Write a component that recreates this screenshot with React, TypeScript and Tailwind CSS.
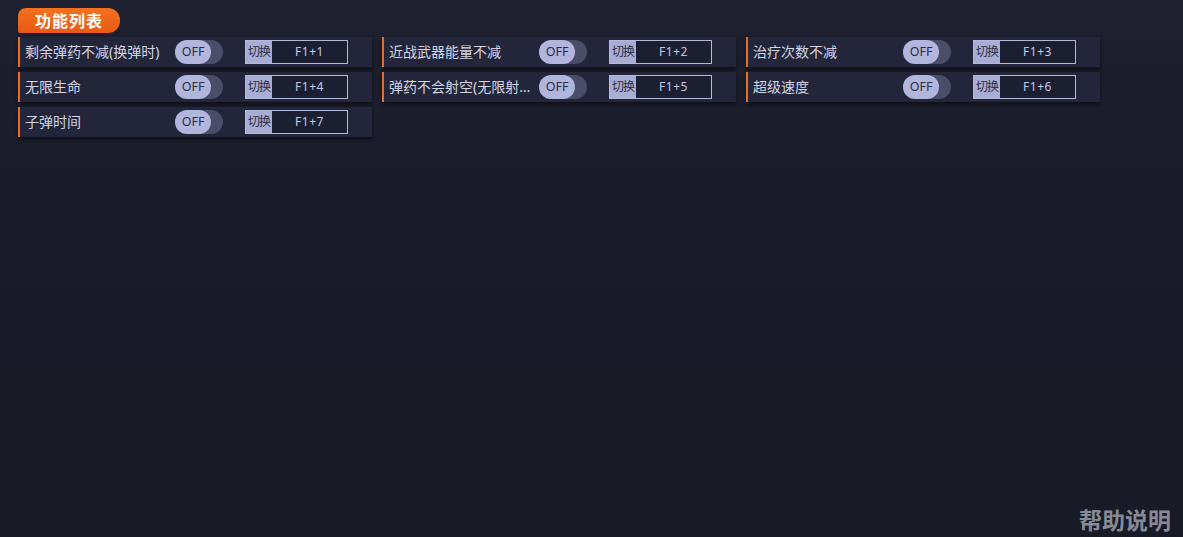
import React from 'react'

interface Cheat {
  name: string
  key: string
}

const CHEATS: Cheat[] = [
  { name: '剩余弹药不减(换弹时)', key: 'F1+1' },
  { name: '近战武器能量不减', key: 'F1+2' },
  { name: '治疗次数不减', key: 'F1+3' },
  { name: '无限生命', key: 'F1+4' },
  { name: '弹药不会射空(无限射击)', key: 'F1+5' },
  { name: '超级速度', key: 'F1+6' },
  { name: '子弹时间', key: 'F1+7' },
]

const FONT = { fontFamily: '"Noto Sans", "Noto Sans CJK SC", sans-serif' }

function Toggle() {
  return (
    <div className="relative h-[24px] w-[48px] shrink-0 rounded-full bg-[#4a4d68]">
      <div className="flex h-[24px] w-[36px] items-center justify-center rounded-full bg-[#b3b6dc] text-[12.5px] leading-[16px] text-[#2a2d44]">
        OFF
      </div>
    </div>
  )
}

function HotKey({ k }: { k: string }) {
  return (
    <div className="flex h-[24px] w-[103px] shrink-0 border border-[#b5b8dd] text-[12px] leading-[16px]">
      <div className="flex w-[26px] items-center justify-center bg-[#a9acd3] tracking-[-1px] text-[#2b2e45]">
        切换
      </div>
      <div className="flex flex-1 items-center justify-center bg-[#1c1f31] tracking-[0.5px] text-[#c3c6e4]">
        {k}
      </div>
    </div>
  )
}

function CheatRow({ cheat }: { cheat: Cheat }) {
  return (
    <div className="flex h-[30px] items-center border-l-2 border-[#f26a1b] bg-[#23263a] pl-[5px] shadow-[0_3px_4px_rgba(0,0,0,0.45)]">
      <div className="w-[150px] shrink-0 truncate pr-[6px] text-[14px] leading-[20px] text-[#d3d5e4]">
        {cheat.name}
      </div>
      <Toggle />
      <div className="w-[22px] shrink-0" />
      <HotKey k={cheat.key} />
    </div>
  )
}

export default function App() {
  return (
    <div
      style={FONT}
      className="relative h-[537px] w-[1183px] overflow-hidden bg-[linear-gradient(180deg,#1f2030_0%,#1b1d2b_25%,#181a27_60%,#181a26_100%)]"
    >
      <div className="flex flex-col pl-[18px] pt-[8px]">
        <div className="flex h-[25px] w-[102px] items-center justify-center rounded-bl-[2px] rounded-tl-[8px] rounded-r-[12px] bg-[linear-gradient(180deg,#f4711f,#e85a15)] text-[16px] font-bold leading-[20px] tracking-[1px] text-white">
          功能列表
        </div>
        <div className="mt-[4px] grid w-[1082px] grid-cols-3 gap-x-[10px] gap-y-[5px]">
          {CHEATS.map((c) => (
            <CheatRow key={c.key} cheat={c} />
          ))}
        </div>
      </div>
      <div className="absolute bottom-[3px] right-[12px] text-[23px] font-bold leading-[28px] text-[#878a96]">
        帮助说明
      </div>
    </div>
  )
}
